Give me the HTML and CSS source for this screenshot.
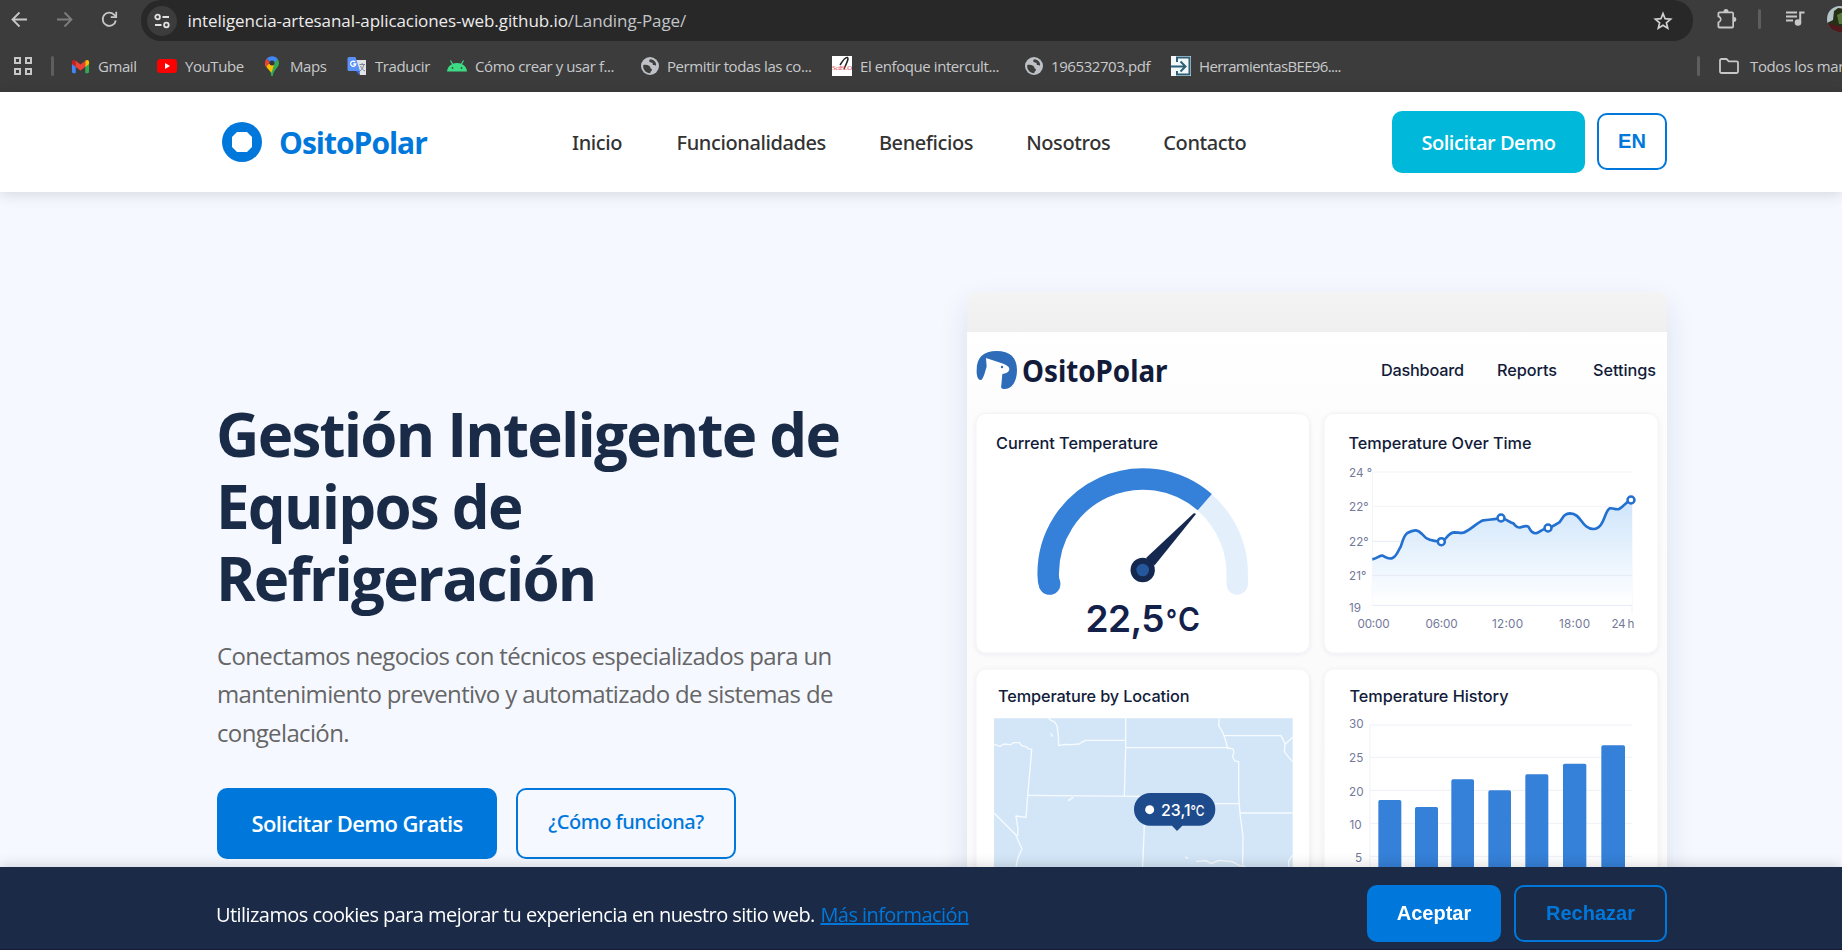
FILE: index.html
```html
<!DOCTYPE html>
<html lang="es">
<head>
<meta charset="utf-8">
<title>OsitoPolar</title>
<link rel="stylesheet" href="styles.css">
</head>
<body>
<div class="browser">
  <div class="toolbar">
    <div class="nav-icons">
      <svg width="17" height="17" viewBox="0 0 17 17" fill="none" stroke="#c7c7c7" stroke-width="1.8"><path d="M16 8.5H2M8.5 1.5l-7 7 7 7"/></svg>
      <svg width="17" height="17" viewBox="0 0 17 17" fill="none" stroke="#7d7d7d" stroke-width="1.8"><path d="M1 8.5h14M8.5 1.5l7 7-7 7"/></svg>
      <svg width="17" height="17" viewBox="0 0 17 17" fill="none" stroke="#c7c7c7" stroke-width="1.8"><path d="M14.8 9.5A6.6 6.6 0 1 1 13 3.6L14.8 5.4"/><path d="M15.2 .8v5.4H9.8"/></svg>
    </div>
    <div class="omnibox">
      <span class="site-info"><svg width="16" height="16" viewBox="0 0 16 16" fill="none" stroke="#e3e3e3" stroke-width="1.8"><circle cx="3.6" cy="4" r="2.3"/><path d="M8.5 4H15M1 12h6.5"/><circle cx="12.4" cy="12" r="2.3"/></svg></span>
      <span class="url">inteligencia-artesanal-aplicaciones-web.github.io<span class="path">/Landing-Page/</span></span>
      <svg class="star" width="20" height="20" viewBox="0 0 20 20" fill="none" stroke="#d0d0d0" stroke-width="1.7"><path d="M10 2.6l2.1 5.1 5.5.5-4.2 3.6 1.3 5.4L10 14.3l-4.7 2.9 1.3-5.4-4.2-3.6 5.5-.5z"/></svg>
    </div>
    <div class="tools">
      <svg width="21" height="22" viewBox="0 0 21 22" fill="#c7c7c7"><path d="M3.500 3.500h4a2.500 2.500 0 0 1 5 0h3.500a2 2 0 0 1 2 2v3.600a2.400 2.400 0 0 1 0 4.800v4.500a2 2 0 0 1-2 2h-12.500a2 2 0 0 1-2-2v-4.600c3.300-.8 3.300-4 0-4.800v-3.500a2 2 0 0 1 2-2zM3.300 5.300v2.500c3 1.400 3 5.600 0 7v3.700h13v-13.200z" fill-rule="evenodd"/></svg>
      <span class="tick"></span>
      <svg width="20" height="18" viewBox="0 0 20 18" fill="none" stroke="#c7c7c7" stroke-width="2"><path d="M1 2.500h11M1 6.500h11M1 10.500h7M19.500 2.500h-4.300v10"/><circle cx="13" cy="12.500" r="2.300" fill="#c7c7c7"/></svg>
      <svg class="avatar" width="26" height="26" viewBox="0 0 26 26"><defs><clipPath id="av"><circle cx="13" cy="13" r="13"/></clipPath></defs><g clip-path="url(#av)"><path fill="#b5c4ca" d="M0 0h26v26H0z"/><path fill="#263016" d="M7 5l4-3 15 2v22H0v-9l6-3z"/><path fill="#587840" d="M10 9l8-4v13h-6z"/><path fill="#50191d" d="M0 17l7 2 19 3v4H0z"/></g></svg>
    </div>
  </div>
  <div class="bookmarks">
    <svg class="apps" width="18" height="18" viewBox="0 0 18 18" fill="none" stroke="#c7c7c7" stroke-width="2"><path d="M1 1h5v5H1zM12 1h5v5h-5zM1 12h5v5H1zM12 12h5v5h-5z"/></svg>
    <span class="tick"></span>
    <span class="bm"><svg width="19" height="20" viewBox="0 0 20 20"><path fill="#4285f4" d="M1 6l4 3v8.500H2.500A1.500 1.500 0 0 1 1 16z"/><path fill="#34a853" d="M19 6l-4 3v8.500h2.500A1.500 1.500 0 0 0 19 16z"/><path fill="#fbbc04" d="M15 4.500c2-1.600 4-.5 4 1.500v2l-4 3z"/><path fill="#c5221f" d="M5 4.500C3 2.900 1 4 1 6v2l4 3z"/><path fill="#ea4335" d="M5 4.500l5 3.800 5-3.800V11l-5 3.800L5 11z"/></svg>Gmail</span>
    <span class="bm"><svg width="20" height="20" viewBox="0 0 20 20"><rect y="3" width="20" height="14" rx="3.500" fill="#f00"/><path fill="#fff" d="M8 7l5 3-5 3z"/></svg>YouTube</span>
    <span class="bm maps"><svg width="16" height="20" viewBox="0 0 16 20"><path fill="#34a853" d="M15 7c0 5-5.500 6-6.200 13H7.200C7 16 5 14 3 11.500L13.500 3c1 1.200 1.500 2.500 1.500 4z"/><path fill="#fbbc04" d="M7.700 16.500C6 14.500 1 11 1 7l9 1.500z"/><path fill="#ea4335" d="M2.500 2.800L6 6.500 2.200 11C.5 8.500.6 5 2.500 2.800z"/><path fill="#4285f4" d="M2.500 2.800C5-.5 11-1 13.700 3L9.500 7.500 5.700 5.500z"/><circle cx="8" cy="7" r="2.500" fill="#35363a"/></svg>Maps</span>
    <span class="bm"><svg width="20" height="20" viewBox="0 0 20 20"><path fill="#e1e3e6" d="M8 4h11v15h-6z"/><path fill="#5b92f7" d="M2 1h6.500L13 15H2a1.500 1.500 0 0 1-1.500-1.500v-11A1.500 1.500 0 0 1 2 1z"/><path fill="#3566d6" d="M9 15h4l-1 4z"/><path d="M8.200 6A2.600 2.600 0 1 0 8.800 8H6.300" fill="none" stroke="#fff" stroke-width="1.300"/><path d="M12.500 8.500H18M15.200 7v1.500M13 15c2-1.500 3.300-3.500 3.800-6.400M13.500 10c1 2.500 2.500 4 4.500 5" fill="none" stroke="#7d8794"/></svg>Traducir</span>
    <span class="bm"><svg width="20" height="20" viewBox="0 0 20 20"><path fill="#3ddc84" d="M0 15.500C.3 11.500 3.500 7 10 7s9.700 4.500 10 8.500z"/><path stroke="#3ddc84" stroke-width="1.200" d="M3.500 4.500l2.300 4M16.500 4.500l-2.300 4"/><circle cx="5.500" cy="12" r=".9" fill="#2b5c40"/><circle cx="14.500" cy="12" r=".9" fill="#2b5c40"/></svg>Cómo crear y usar f...</span>
    <span class="bm"><svg width="18" height="18" viewBox="0 0 18 18"><circle cx="9" cy="9" r="9" fill="#bdc1c6"/><path fill="#3c3c3c" d="M2.300 8C4 7.300 9 8 9.300 10.500c0 1.500 2 1 1.700 2.500-.3 1.200-1.700 1-1.700 3.200C4.500 16.200 1.500 12 2.300 8zM9.500 2.300c-1.500.5-1.700 2.200-.5 3 2 .2 3 .5 2.700 2.200 1 1 2 .2 3.300 1.200.7-3-2-6.200-5.500-6.400z"/></svg>Permitir todas las co...</span>
    <span class="bm"><svg width="20" height="20" viewBox="0 0 20 20"><path fill="#fff" d="M0 0h20v20H0z"/><path d="M8 9C11 4 14 1 15.500 1.500c1.500 1-.5 5-3.500 11.500" fill="none" stroke="#222" stroke-width="1.500"/><text x="0" y="14" class="sci" textLength="20">SciELO</text></svg>El enfoque intercult...</span>
    <span class="bm"><svg width="18" height="18" viewBox="0 0 18 18"><circle cx="9" cy="9" r="9" fill="#bdc1c6"/><path fill="#3c3c3c" d="M2.300 8C4 7.300 9 8 9.300 10.500c0 1.500 2 1 1.700 2.500-.3 1.200-1.700 1-1.700 3.200C4.500 16.200 1.500 12 2.300 8zM9.500 2.300c-1.500.5-1.700 2.200-.5 3 2 .2 3 .5 2.700 2.200 1 1 2 .2 3.300 1.200.7-3-2-6.200-5.500-6.400z"/></svg>196532703.pdf</span>
    <span class="bm tight"><svg width="20" height="20" viewBox="0 0 20 20"><path fill="#f4f7f8" d="M0 0h20v20H0z"/><path fill="none" stroke="#2c6079" stroke-width="2" d="M6 6V1.500h12.500v17H6V15M0 10.500h14M9.500 5.500l5 5-5 5"/></svg>HerramientasBEE96....</span>
    <span class="tick"></span>
    <span class="bm all"><svg width="20" height="16" viewBox="0 0 20 16" fill="none" stroke="#c7c7c7" stroke-width="1.800"><path d="M2.500 1h5l2.300 2.300h7.700A1.500 1.500 0 0 1 19 4.800v8.700a1.500 1.500 0 0 1-1.500 1.500h-15A1.500 1.500 0 0 1 1 13.500v-11A1.500 1.500 0 0 1 2.500 1z"/></svg>Todos los mar</span>
  </div>
</div>

<header class="site-header">
  <div class="container header-row">
    <a class="logo"><svg width="50" height="50" viewBox="0 0 50 50"><circle cx="25" cy="25" r="20" fill="#0078db"/><path fill="#fff" d="M20 15h10l5 5v10l-5 5H20l-5-5V20z"/></svg>OsitoPolar</a>
    <nav class="menu"><a>Inicio</a><a>Funcionalidades</a><a>Beneficios</a><a>Nosotros</a><a>Contacto</a></nav>
    <div class="actions"><a class="btn demo">Solicitar Demo</a><button class="btn lang">EN</button></div>
  </div>
</header>

<main class="hero">
  <div class="container hero-row">
    <div class="copy">
      <h1>Gestión Inteligente de<br>Equipos de<br>Refrigeración</h1>
      <p>Conectamos negocios con técnicos especializados para un<br>mantenimiento preventivo y automatizado de sistemas de<br>congelación.</p>
      <div class="cta"><a class="btn primary">Solicitar Demo Gratis</a><a class="btn outline">¿Cómo funciona?</a></div>
    </div>
    <div class="mock">
      <svg width="700" height="700" viewBox="967 292 700 700">
        <defs>
          <linearGradient id="band" x1="0" y1="0" x2="0" y2="1"><stop offset="0" stop-color="#f4f4f4"/><stop offset="1" stop-color="#efefef"/></linearGradient>
          <linearGradient id="body" x1="0" y1="0" x2="0" y2="1"><stop offset="0" stop-color="#fff"/><stop offset=".15" stop-color="#fcfcfd"/><stop offset="1" stop-color="#fafafb"/></linearGradient>
          <linearGradient id="area" gradientUnits="userSpaceOnUse" x1="0" y1="690" x2="0" y2="1000"><stop offset="0" stop-color="#cfe5fb"/><stop offset=".5" stop-color="#e6f2fd"/><stop offset="1" stop-color="#fff"/></linearGradient>
          <filter id="soft" x="-5%" y="-5%" width="110%" height="112%"><feDropShadow dx="0" dy="1" stdDeviation="2" flood-color="#3c5078" flood-opacity=".07"/></filter>
        </defs>
        <path fill="url(#body)" d="M967 332h700v660H967z"/>
        <path fill="url(#band)" d="M967 292h700v40H967z"/>
        <!-- brand -->
        <g transform="translate(950 270) scale(.33333)">
          <path fill="#2e6bb8" d="M80 300C80 262 100 243 140 243C180 243 201 262 201 300C201 336 185 357 163 357C152 357 153 350 154 345L157 312C168 311 178 306 178 297C178 289 168 285 160 281L108 264L110 290C106 300 100 330 92 330C83 330 79 315 80 300Z"/>
          <circle cx="156" cy="291" r="3.500" fill="#2e6bb8"/>
        </g>
        <g class="ink">
          <text class="brand" x="1022" y="381.500" textLength="145.500" lengthAdjust="spacingAndGlyphs">OsitoPolar</text>
          <text x="1381" y="376" textLength="83">Dashboard</text>
          <text x="1497" y="376" textLength="60">Reports</text>
          <text x="1593" y="376" textLength="63">Settings</text>
        </g>
        <!-- cards -->
        <g fill="#fff" stroke="#f3f4f6" filter="url(#soft)">
          <rect x="976" y="413.500" width="333.500" height="239.500" rx="10"/>
          <rect x="1324" y="413.500" width="334" height="239.500" rx="10"/>
          <rect x="976" y="669" width="333.500" height="300" rx="10"/>
          <rect x="1324" y="669" width="334" height="300" rx="10"/>
        </g>
        <g class="ink">
          <text x="996" y="449" textLength="162">Current Temperature</text>
          <text x="1348.500" y="449" textLength="183">Temperature Over Time</text>
          <text x="998" y="702" textLength="191.500">Temperature by Location</text>
          <text x="1349.500" y="702" textLength="159">Temperature History</text>
        </g>
        <!-- gauge -->
        <path d="M1237.200 584C1237.400 580 1237.200 577 1237.200 573.500A94.500 94.500 0 0 0 1180 487" fill="none" stroke="#e3f0fc" stroke-width="21.500" stroke-linecap="round"/>
        <path d="M1049.500 584C1048 580 1048.200 577 1048.200 573.500A94.500 94.500 0 0 1 1204.800 502.200" fill="none" stroke="#3580d8" stroke-width="21.500"/>
        <circle cx="1049.600" cy="584" r="10.800" fill="#3580d8"/>
        <path fill="#152850" d="M1195.600 514.600L1154.500 565.500L1146 558L1193.500 513.500Q1196 512.500 1195.600 514.600Z"/>
        <circle cx="1142.700" cy="570" r="12.200" fill="#152850"/><circle cx="1142.700" cy="570" r="6.300" fill="#25579c"/>
        <text class="big" x="1085.500" y="632" textLength="79">22,5</text>
        <text class="ring" x="1166" y="629" textLength="11" lengthAdjust="spacingAndGlyphs">°</text>
        <text class="deg" x="1178" y="631" textLength="22" lengthAdjust="spacingAndGlyphs">C</text>
        <!-- line chart -->
        <g transform="translate(1300 270) scale(.33333)">
          <path stroke="#f2f3f8" stroke-width="3" d="M217 606H997M217 709H997M217 606V1006M996 690V1030" fill="none"/>
          <path fill="url(#area)" d="M217 868C235 864 238 856 248 857C258 862 262 868 275 865C290 862 295 840 302 830C310 810 310 798 322 789C345 776 355 780 366 792C380 810 395 813 424 815C440 812 440 790 462 787C475 787 480 790 490 788C510 782 530 758 550 751C570 748 590 748 603 744C625 748 625 757 640 760C650 772 655 775 665 771C690 763 685 775 695 785C715 800 720 775 744 774C758 772 762 765 778 757C790 742 792 731 810 730C845 731 845 777 880 777C915 775 912 722 930 715C940 713 945 720 957 717C972 710 975 697 993 690H996V1006H217Z"/>
          <path stroke="#e3ebf5" stroke-width="3" d="M217 814H997M217 916H997M217 1006H997"/>
          <path fill="none" stroke="#2270d0" stroke-width="8" d="M217 868C235 864 238 856 248 857C258 862 262 868 275 865C290 862 295 840 302 830C310 810 310 798 322 789C345 776 355 780 366 792C380 810 395 813 424 815C440 812 440 790 462 787C475 787 480 790 490 788C510 782 530 758 550 751C570 748 590 748 603 744C625 748 625 757 640 760C650 772 655 775 665 771C690 763 685 775 695 785C715 800 720 775 744 774C758 772 762 765 778 757C790 742 792 731 810 730C845 731 845 777 880 777C915 775 912 722 930 715C940 713 945 720 957 717C972 710 975 697 993 690"/>
          <g fill="#fff" stroke="#2270d0" stroke-width="7.500"><circle cx="424" cy="815" r="10.500"/><circle cx="603" cy="744" r="10.500"/><circle cx="744" cy="774" r="10.500"/><circle cx="993" cy="690" r="10.500"/></g>
        </g>
        <g class="axis">
          <text x="1349" y="476.500">24 °</text><text x="1349" y="511">22°</text><text x="1349" y="545.500">22°</text><text x="1349" y="580">21°</text><text x="1349" y="611.500">19</text>
          <text x="1357.500" y="628" textLength="32">00:00</text><text x="1425.500" y="628" textLength="32">06:00</text><text x="1492" y="628" textLength="31">12:00</text><text x="1559" y="628" textLength="31">18:00</text><text x="1611.500" y="628" textLength="23">24 h</text>
          <text x="1349" y="728">30</text><text x="1349" y="762">25</text><text x="1349" y="796">20</text><text x="1349.500" y="829">10</text><text x="1355" y="862">5</text>
        </g>
        <!-- map -->
        <g transform="translate(950 650) scale(.33333)">
          <path fill="#d3e6f7" d="M132 205h896v500H132z"/>
          <g fill="none" stroke="#f7fbff" stroke-width="4" stroke-linejoin="round">
            <path d="M132 283l18 6 12-7 20 2 8-6 18 0 8 10 12 2 6 6 11 2-5 60-7 78-2 30-3 36-30-4 6 40-1 20"/>
            <path d="M132 489l66 66 8 20 10 22-12 26-6 28"/>
            <path d="M295 205l8 6 10 4 8 12 4 30 1 30 18-4 20 1 24-2 12-8 8-3h119M302 250l6 10M527 205v88l-4 145M527 293h303l8 3M234 436l340 3M354 452l16-10"/>
            <path d="M808 205l-2 22 10 16 6 14 8 24 1 12 18 4 3 10-5 14 8 12 11 2v100l4 56 9 68-1 85M822 257h171l12 24-2 24 14 18 11 12M1028 261l-22 22M870 489h158M795 461h72M583 525l-5 126"/>
            <path d="M706 620l8 6M738 634l30-2 16 9 22-10 40 4 24 12 16 2M1028 615l-12 18 0 18"/>
          </g>
          <path fill="#1e4b8b" d="M601 429h146a49 49 0 0 1 0 98H697L681 543 666 527H601a49 49 0 0 1 0-98z"/>
          <circle cx="599" cy="479" r="13.500" fill="#fff"/>
        </g>
        <text class="pin" x="1161" y="816" textLength="29.500" lengthAdjust="spacingAndGlyphs">23,1</text><text class="pin-deg" x="1190.500" y="816" textLength="14" lengthAdjust="spacingAndGlyphs">°C</text>
        <!-- bar chart -->
        <g transform="translate(1310 650) scale(.33333)">
          <path fill="none" stroke="#eff1f6" stroke-width="3" d="M180 225H967M180 322H967M180 421H967M180 520H967M180 619H967M180 225V700"/>
          <g fill="#3580d8"><rect x="205" y="450" width="69" height="300" rx="5"/><rect x="315" y="471" width="69" height="300" rx="5"/><rect x="424" y="388" width="68" height="400" rx="5"/><rect x="535" y="421" width="68" height="400" rx="5"/><rect x="646" y="373" width="69" height="400" rx="5"/><rect x="759" y="341" width="70" height="400" rx="5"/><rect x="874" y="286" width="71" height="400" rx="5"/></g>
        </g>
      </svg>
    </div>
  </div>
</main>

<div class="cookies">
  <div class="container cookie-row">
    <p>Utilizamos cookies para mejorar tu experiencia en nuestro sitio web. <a>Más información</a></p>
    <div class="cookie-actions"><button class="btn accept">Aceptar</button><button class="btn reject">Rechazar</button></div>
  </div>
</div>
</body>
</html>
```
FILE: styles.css
```css
* { box-sizing: border-box; }
html, body { height: 100%; }
body { margin: 0; overflow: hidden; background: #f5f8ff; font-family: "Open Sans", "Noto Sans", sans-serif; color: #333; }
svg { display: block; flex: none; }
.container { width: 1450px; margin-left: 217px; }
.btn { display: flex; align-items: center; justify-content: center; border-radius: 10px; white-space: nowrap; }
button.btn { font: bold 20px "Liberation Sans", Arial, sans-serif; padding: 0; }

.browser { height: 92px; background: #3c3c3c; overflow: hidden; }
.toolbar { display: flex; height: 41px; }
.nav-icons { display: flex; flex: none; gap: 28px; width: 141px; padding: 11px 0 0 11px; }
.omnibox { display: flex; flex: none; align-items: center; width: 1552px; height: 41px; padding: 0 20px 0 6px; background: #282828; border-radius: 20px; }
.site-info { display: flex; align-items: center; justify-content: center; width: 30px; height: 30px; border-radius: 50%; background: #3c3c3c; }
.url { flex: 1; padding-left: 10.5px; font-size: 17px; letter-spacing: -.08px; color: #ececec; }
.path { color: #c2c5c9; }
.tools { display: flex; flex: none; align-items: center; height: 38px; padding-left: 23px; }
.tools .tick { margin: 0 24px 0 21px; }
.avatar { margin-left: 22px; }
.tick { width: 3px; height: 20px; border-radius: 2px; background: #5d5e60; }
.bookmarks { display: grid; grid-template-columns: 51px 20px 86px 106px 84px 100px 194px 191px 193px 146px 526px 22px auto; align-items: center; height: 49px; }
.apps { margin-left: 14px; }
.bm { display: flex; align-items: center; gap: 8px; font-size: 15px; letter-spacing: -.42px; color: #c7c9cb; white-space: nowrap; }
.bm.tight { letter-spacing: -.65px; }
.bm.all { gap: 11px; letter-spacing: -.37px; }
.bm.maps { gap: 10px; padding-left: 1px; }
.sci { font: 7px "Liberation Serif", serif; fill: #e2444f; }

.site-header { position: relative; height: 100px; background: #fff; box-shadow: 0 2px 14px rgba(0,0,0,.14); }
.header-row { display: flex; align-items: center; height: 100px; }
.logo { display: flex; align-items: center; gap: 12px; width: 355px; color: #0078db; font-size: 30px; font-weight: 700; letter-spacing: -1px; }
.menu { display: flex; gap: 53px; flex: 1; font-family: "Noto Sans", sans-serif; font-size: 20px; font-weight: 500; letter-spacing: -.4px; }
.menu a:first-child { margin-right: 1.5px; }
.actions { display: flex; align-items: center; gap: 12px; }
.demo { width: 193px; height: 62px; background: #00b8d9; color: #fff; font-size: 20px; font-weight: 600; letter-spacing: -.48px; }
button.lang { width: 70px; height: 57px; margin-bottom: 1px; background: transparent; border: 2px solid #0078db; color: #0078db; }

.hero { padding-top: 100px; }
.hero-row { display: grid; grid-template-columns: 750px 700px; }
.copy { padding-top: 106px; }
h1 { margin: 0 0 23px -1px; font-size: 60px; line-height: 72px; letter-spacing: -1.76px; color: #1a2b48; }
.copy p { margin: 0 0 36px; font-size: 24px; line-height: 38.4px; letter-spacing: -.64px; color: #666; }
.cta { display: flex; gap: 19px; }
.primary { width: 280px; height: 71px; padding-bottom: 1px; background: #0078db; color: #fff; font-size: 22px; font-weight: 600; letter-spacing: -.63px; }
.outline { width: 220px; height: 71px; padding-bottom: 4px; border: 2px solid #0078db; color: #0078db; font-family: "Noto Sans", sans-serif; font-size: 20px; font-weight: 500; letter-spacing: -.5px; }
.mock { height: 700px; border-radius: 10px; overflow: hidden; box-shadow: 0 12px 30px rgba(20,40,80,.11); }
.mock text { font-family: Inter, Roboto, sans-serif; }
.ink text { font-size: 16.3px; font-weight: 450; fill: #121c3a; }
.ink text.brand { font: 700 30px "Noto Sans", sans-serif; }
.big { font-size: 37px; font-weight: 600; fill: #13214a; }
.deg { font-size: 32px; font-weight: 600; fill: #13214a; }
.ring { font-size: 27px; font-weight: 600; fill: #13214a; }
.axis text { font-size: 11.7px; fill: #73799a; }
.pin { font-size: 16.5px; font-weight: 500; fill: #fff; }
.pin-deg { font-size: 14px; font-weight: 500; fill: #fff; }

.cookies { position: fixed; left: 0; right: 0; bottom: 0; height: 83px; background: #1b2b47; box-shadow: 0 -2px 12px rgba(0,0,0,.14); border-bottom: 1px solid #111c33; }
.cookie-row { display: flex; justify-content: space-between; padding-top: 18px; height: 75px; align-items: center; }
.cookies p { margin: 1px 0 0 -1px; font-size: 20px; letter-spacing: -.565px; color: #fff; white-space: nowrap; }
.cookies a { color: #0078db; text-decoration: underline; margin-left: 1px; }
.cookie-actions { display: flex; gap: 13px; }
.accept { width: 134px; height: 57px; background: #0078db; border: 0; color: #fff; }
.reject { width: 153px; height: 57px; background: transparent; border: 2px solid #0078db; color: #0078db; }
```
